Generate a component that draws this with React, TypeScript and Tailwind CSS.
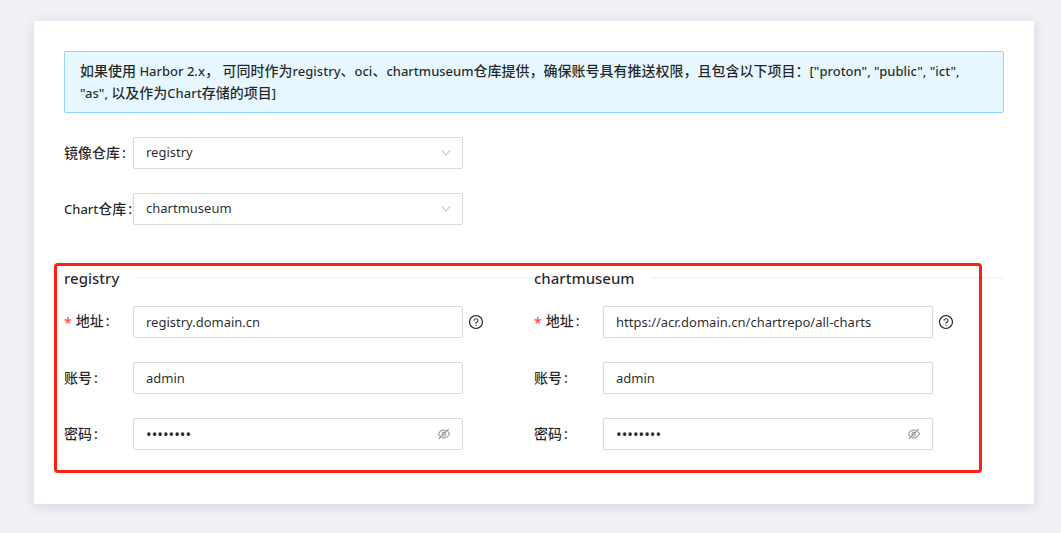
import React, { useState } from 'react';
import { AiOutlineDown, AiOutlineEyeInvisible, AiOutlineQuestionCircle } from 'react-icons/ai';

const inputClass =
    'h-8 w-full rounded-xs border border-[#d9d9d9] bg-white px-3 text-black/85 outline-none focus:border-[#40a9ff]';

type RowProps = {
    id: string;
    label: React.ReactNode;
    required?: boolean;
    after?: React.ReactNode;
    children: React.ReactNode;
};

// Chinese text is set one step larger than the latin text around it
const Zh = ({ children }: { children: React.ReactNode }) => <span className="text-sm leading-none">{children}</span>;

// Label on the left, control on the right
const FormRow = ({ id, label, required, after, children }: RowProps) => (
    <div className="flex items-center">
        <label htmlFor={id} className="flex w-[69px] shrink-0 text-sm font-medium whitespace-nowrap">
            {required && <span className="mr-1 pt-0.5 text-[#ff4d4f]">*</span>}
            {label}
            <span className="ml-0.5">:</span>
        </label>
        <div className="relative w-full max-w-[330px]">{children}</div>
        {after}
    </div>
);

const SelectRow = ({ id, label, options }: { id: string; label: React.ReactNode; options: string[] }) => (
    <FormRow id={id} label={label}>
        <select id={id} className={`${inputClass} appearance-none text-[13px]`}>
            {options.map((option) => (
                <option key={option}>{option}</option>
            ))}
        </select>
        <AiOutlineDown size={12} className="pointer-events-none absolute top-[10px] right-[11px] text-black/25" />
    </FormRow>
);

const RepoForm = ({ name, address }: { name: string; address: string }) => {
    const [url, setUrl] = useState(address);
    const [account, setAccount] = useState('admin');
    const [password, setPassword] = useState('password');
    const [visible, setVisible] = useState(false);

    return (
        <section>
            <div className="flex items-center gap-4">
                <h2 className="text-[15px] leading-[22px] font-medium">{name}</h2>
                <div className="h-0.5 flex-1 bg-[#f7f7f7]" />
            </div>

            <div className="mt-[17px] flex flex-col gap-6">
                <FormRow
                    id={`${name}-url`}
                    label="地址"
                    required
                    after={<AiOutlineQuestionCircle size={16} className="ml-[5px] shrink-0" />}
                >
                    <input
                        id={`${name}-url`}
                        value={url}
                        className={`${inputClass} text-[13px]`}
                        onChange={(e) => setUrl(e.target.value)}
                    />
                </FormRow>

                <FormRow id={`${name}-account`} label="账号">
                    <input
                        id={`${name}-account`}
                        value={account}
                        className={`${inputClass} text-[13px]`}
                        onChange={(e) => setAccount(e.target.value)}
                    />
                </FormRow>

                <FormRow id={`${name}-password`} label="密码">
                    <input
                        id={`${name}-password`}
                        type={visible ? 'text' : 'password'}
                        value={password}
                        className={`${inputClass} pr-9 text-[15px]`}
                        onChange={(e) => setPassword(e.target.value)}
                    />
                    <button
                        type="button"
                        aria-label="toggle password"
                        className="absolute top-[9px] right-3 cursor-pointer text-black/45"
                        onClick={() => setVisible(!visible)}
                    >
                        <AiOutlineEyeInvisible size={14} />
                    </button>
                </FormRow>
            </div>
        </section>
    );
};

const App = () => {
    return (
        <div className="min-h-screen bg-[#f0f1f6] pt-[21px] pr-[27px] pb-[29px] pl-[34px] font-['Noto_Sans','Noto_Sans_CJK_SC',sans-serif] text-[13px] text-black/85">
            <main className="bg-white px-[30px] pt-[30px] pb-[54px] shadow-[0_2px_12px_rgba(0,0,0,0.12)]">
                <div className="rounded-xs border border-[#91d5ff] bg-[#e6f7ff] px-[15px] py-2 leading-[22px] font-medium">
                    <Zh>如果使用</Zh> Harbor 2.x<Zh>， 可同时作为</Zh>registry<Zh>、</Zh>oci<Zh>、</Zh>chartmuseum
                    <Zh>仓库提供，确保账号具有推送权限，且包含以下项目：</Zh>
                    <span>["proton", "public", "ict",</span> <span>"as",</span> <Zh>以及作为</Zh>Chart
                    <Zh>存储的项目</Zh>]
                </div>

                <div className="mt-6 flex flex-col gap-6">
                    <SelectRow id="image-repo" label="镜像仓库" options={['registry']} />
                    <SelectRow
                        id="chart-repo"
                        label={
                            <span>
                                <span className="text-[13px] leading-none">Chart</span>仓库
                            </span>
                        }
                        options={['chartmuseum']}
                    />
                </div>

                <div className="relative mt-[42px] grid grid-cols-2">
                    <RepoForm name="registry" address="registry.domain.cn" />
                    <RepoForm name="chartmuseum" address="https://acr.domain.cn/chartrepo/all-charts" />

                    {/* Red highlight around both repositories */}
                    <div className="pointer-events-none absolute -top-1 right-[22px] -bottom-[23px] -left-[10px] rounded-sm border-3 border-[#ff1f14]" />
                </div>
            </main>
        </div>
    );
};

export default App;
